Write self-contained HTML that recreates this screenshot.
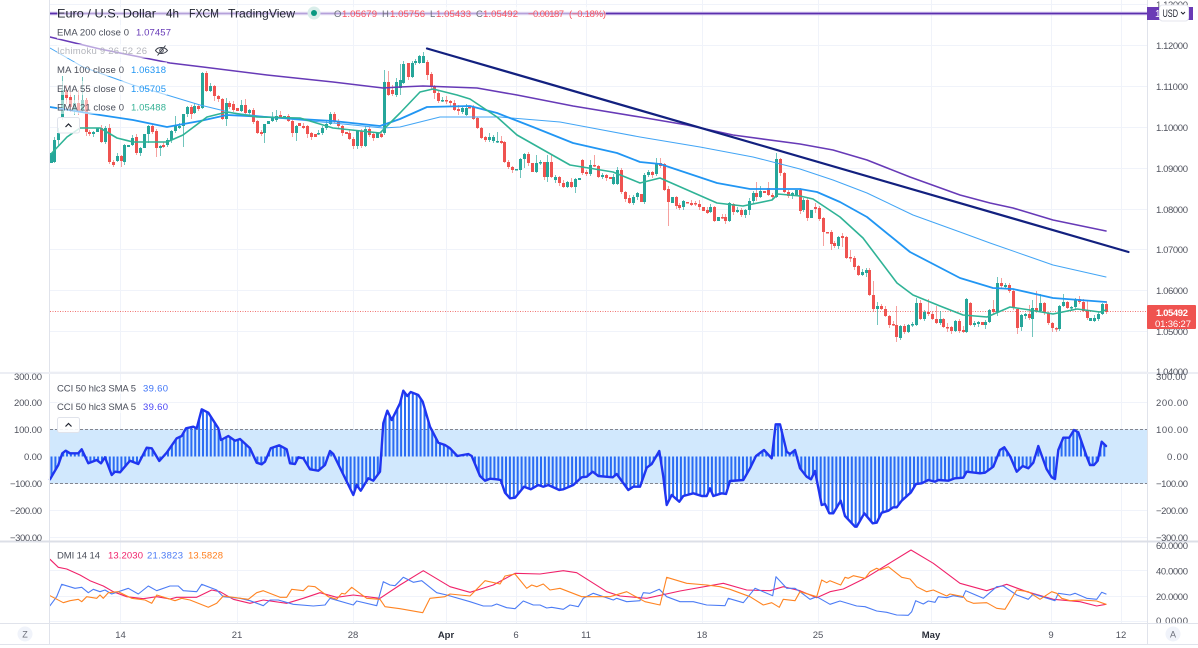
<!DOCTYPE html>
<html><head><meta charset="utf-8"><style>
html,body{margin:0;padding:0;background:#fff;width:1198px;height:648px;overflow:hidden}
svg{display:block;filter:blur(.3px)}
text{font-family:"Liberation Sans",sans-serif;font-size:9.5px;fill:#4a4e5a}
.ax{font-size:9.5px;fill:#50535e}
.lg{font-size:9.5px;fill:#4a4e5a}
polyline{fill:none;stroke-linejoin:round;stroke-linecap:round}
.red{fill:#f7525f}
</style></head><body>
<svg width="1198" height="648" viewBox="0 0 1198 648" xmlns="http://www.w3.org/2000/svg">
<g stroke="#f0f3fa" stroke-width="1" fill="none">
<path d="M50 4.5H1147M50 45.5H1147M50 86.5H1147M50 127.5H1147M50 168.5H1147M50 209.5H1147M50 249.5H1147M50 290.5H1147M50 331.5H1147M50 372H1147"/>
<path d="M50 402.5H1147M50 429.5H1147M50 456.5H1147M50 483.5H1147M50 510.5H1147M50 537.5H1147M50 570.5H1147M50 596.5H1147M50 621.5H1147"/>
<path d="M120.5 0V623M237.5 0V623M353.5 0V623M446.5 0V623M516.5 0V623M586.5 0V623M702.5 0V623M818.5 0V623M931.5 0V623M1051.5 0V623M1121.5 0V623"/>
</g>
<!-- CCI band -->
<rect x="50" y="429.5" width="1097" height="54" fill="#d1e8fd"/>
<path d="M50 429.5H1147M50 483.5H1147" stroke="#82858f" stroke-width="1" stroke-dasharray="3 2" fill="none"/>
<!-- price line -->
<path d="M50 311.5H1147" stroke="#ef5350" stroke-width="1" stroke-opacity=".8" stroke-dasharray="1 1.5" fill="none"/>
<!-- candles -->
<path id="gw" stroke="#26a69a" stroke-width="1" stroke-opacity=".65" fill="none"/>
<path id="rw" stroke="#ef5350" stroke-width="1" stroke-opacity=".55" fill="none"/>
<path id="gb" stroke="#26a69a" stroke-width="3" fill="none"/>
<path id="rb" stroke="#ef5350" stroke-width="3" fill="none"/>
<!-- MAs -->
<polyline stroke="#673ab7" stroke-width="1.6" points="50,37 100,49 170,63 203,67 267,75 333,82 383,88 400,87 423,86 477,88 517,95 573,106 640,117 687,125 733,135 800,144 833,150 867,160 910,177 960,195 990,203 1013,208 1053,220 1106,231"/>
<polyline stroke="#42a5f5" stroke-width="1" points="50,48 83,67 133,85 167,95 200,105 233,113 277,118 333,123 383,128 400,127 440,117 500,117 560,122 640,137 700,147 753,157 800,169 833,180 867,193 913,215 960,232 990,243 1033,258 1053,265 1106,277"/>
<polyline stroke="#2196f3" stroke-width="1.8" points="50,107 100,115 133,120 167,127 200,121 227,115 267,117 300,119 333,121 380,126 400,119 427,107 470,106 497,113 533,127 573,143 617,153 640,162 660,164 717,183 750,189 800,189 817,192 840,202 867,217 910,252 960,278 993,288 1013,289 1053,298 1106,302"/>
<polyline stroke="#2fb396" stroke-width="1.6" points="50,155 67,137 80,128 100,128 117,138 133,142 167,142 183,135 207,117 227,112 257,117 300,118 333,128 380,133 400,113 420,92 433,89 457,95 470,99 497,117 517,135 547,152 570,165 613,172 640,183 660,178 717,203 743,206 772,200 778,194 800,196 813,199 840,217 863,238 897,283 913,295 940,306 963,315 987,317 1010,307 1030,310 1053,314 1077,309 1100,312 1106,310"/>
<!-- trend line -->
<path d="M427 48.500L1128.500 252" stroke="#12207f" stroke-width="2.200" fill="none" stroke-linecap="round"/>
<!-- top purple line -->
<path d="M50 13.500H1147" stroke="#c9b8e8" stroke-width="3.500" fill="none"/>
<path d="M50 13.500H1147" stroke="#5b2fad" stroke-width="1.500" fill="none"/>
<!-- legend overlays -->
<g fill="#fff" fill-opacity=".55">
<rect x="57" y="7" width="549" height="13"/>
<rect x="57" y="25" width="115" height="14"/>
<rect x="57" y="44" width="112" height="14"/>
<rect x="57" y="62" width="110" height="14"/>
<rect x="57" y="81" width="110" height="14"/>
<rect x="57" y="100" width="110" height="14"/>
<rect x="57" y="381" width="111" height="13"/>
<rect x="57" y="400" width="111" height="13"/>
</g>
<!-- CCI -->
<path id="hist" stroke="#2a6cf4" stroke-width="2" fill="none"/>
<polyline id="cci" stroke="#2035f0" stroke-width="2.400"/>
<!-- DMI -->
<polyline id="dp" stroke="#f0226a" stroke-width="1.100"/>
<polyline id="db" stroke="#4c7cf5" stroke-width="1.100"/>
<polyline id="do" stroke="#ff8422" stroke-width="1.100"/>
<!-- borders -->
<g fill="none" stroke="#e0e3eb">
<path d="M49.500 0V645M1147.500 0V645" stroke-width="1"/>
<path d="M0 373H1198" stroke-width="2" stroke="#eceef4"/>
<path d="M0 541.500H1198" stroke-width="2" stroke="#dcdfe7"/>
<path d="M0 623.500H1198" stroke-width="1"/>
<path d="M0 644.500H1198" stroke-width="1"/>
</g>
<!-- legend text -->
<g>
<text x="57" y="17.500" style="font-size:12px;fill:#1e222d" textLength="99" lengthAdjust="spacingAndGlyphs">Euro / U.S. Dollar</text>
<text x="166" y="17.500" style="font-size:12px;fill:#1e222d" textLength="13" lengthAdjust="spacingAndGlyphs">4h</text>
<text x="189" y="17.500" style="font-size:12px;fill:#1e222d" textLength="30" lengthAdjust="spacingAndGlyphs">FXCM</text>
<text x="228" y="17.500" style="font-size:12px;fill:#1e222d" textLength="67" lengthAdjust="spacingAndGlyphs">TradingView</text>
<circle cx="314" cy="13" r="6.500" fill="#d9eeea"/><circle cx="314" cy="13" r="3" fill="#089981"/>
<text x="334" y="17" class="lg" style="fill:#6a6d78">O</text><text x="342" y="17" class="lg red" textLength="35">1.05679</text>
<text x="382" y="17" class="lg" style="fill:#6a6d78">H</text><text x="390" y="17" class="lg red" textLength="35">1.05756</text>
<text x="430" y="17" class="lg" style="fill:#6a6d78">L</text><text x="436" y="17" class="lg red" textLength="35">1.05433</text>
<text x="476" y="17" class="lg" style="fill:#6a6d78">C</text><text x="483" y="17" class="lg red" textLength="35">1.05492</text>
<text x="528" y="17" class="lg red" textLength="36">−0.00187</text><text x="569" y="17" class="lg red" textLength="37">(−0.18%)</text>

<text x="57" y="35.500" class="lg" textLength="72">EMA 200 close 0</text><text x="136" y="35.500" class="lg" style="fill:#673ab7" textLength="35">1.07457</text>
<text x="57" y="54" class="lg" style="fill:#b4b6bd" textLength="90">Ichimoku 9 26 52 26</text>
<path d="M155.500 50.500C158 46.500 164.500 46.500 167.500 50.500C164.500 54.500 158 54.500 155.500 50.500ZM157.500 55.500L165.500 45.500" fill="none" stroke="#3a3e4a" stroke-width="1"/><circle cx="161.500" cy="50.500" r="1.800" fill="none" stroke="#3a3e4a" stroke-width=".9"/>
<text x="57" y="73" class="lg" textLength="67">MA 100 close 0</text><text x="131" y="73" class="lg" style="fill:#2196f3" textLength="35">1.06318</text>
<text x="57" y="92" class="lg" textLength="67">EMA 55 close 0</text><text x="131" y="92" class="lg" style="fill:#2196f3" textLength="35">1.05705</text>
<text x="57" y="110.500" class="lg" textLength="67">EMA 21 close 0</text><text x="131" y="110.500" class="lg" style="fill:#36b296" textLength="35">1.05488</text>
<rect x="57.500" y="117.500" width="22" height="15.500" rx="2" fill="#fff" fill-opacity=".8" stroke="#e0e3eb"/>
<path d="M65.500 127L68.500 124L71.500 127" fill="none" stroke="#1e222d" stroke-width="1.200"/>

<text x="57" y="391.500" class="lg" textLength="79">CCI 50 hlc3 SMA 5</text><text x="143" y="391.500" class="lg" style="fill:#3f74f7" textLength="25">39.60</text>
<text x="57" y="410" class="lg" textLength="79">CCI 50 hlc3 SMA 5</text><text x="143" y="410" class="lg" style="fill:#4a46f5" textLength="25">39.60</text>
<rect x="57.500" y="417.500" width="22" height="15" rx="2" fill="#fff" fill-opacity=".9" stroke="#e0e3eb"/>
<path d="M65.500 426.500L68.500 423.500L71.500 426.500" fill="none" stroke="#1e222d" stroke-width="1.200"/>

<text x="57" y="558.500" class="lg" textLength="43">DMI 14 14</text>
<text x="108" y="558.500" class="lg" style="fill:#f0226a" textLength="35">13.2030</text>
<text x="147" y="558.500" class="lg" style="fill:#4c7cf5" textLength="36">21.3823</text>
<text x="188" y="558.500" class="lg" style="fill:#ff7f1e" textLength="35">13.5828</text>
</g>
<!-- right axis -->
<g class="axg">
<text class="ax" x="1156" y="8" textLength="32">1.13000</text>
<text class="ax" x="1156" y="49" textLength="32">1.12000</text>
<text class="ax" x="1156" y="90" textLength="32">1.11000</text>
<text class="ax" x="1156" y="131" textLength="32">1.10000</text>
<text class="ax" x="1156" y="172" textLength="32">1.09000</text>
<text class="ax" x="1156" y="213" textLength="32">1.08000</text>
<text class="ax" x="1156" y="253" textLength="32">1.07000</text>
<text class="ax" x="1156" y="294" textLength="32">1.06000</text>
<text class="ax" x="1156" y="335" textLength="32">1.05000</text>
<text class="ax" x="1156" y="375" textLength="32">1.04000</text>
<text class="ax" x="1156" y="380" textLength="30">300.00</text>
<text class="ax" x="1156" y="406" textLength="32">200.00</text>
<text class="ax" x="1156" y="433" textLength="32">100.00</text>
<text class="ax" x="1167" y="460" textLength="21">0.00</text>
<text class="ax" x="1156" y="487" textLength="32">−100.00</text>
<text class="ax" x="1156" y="514" textLength="32">−200.00</text>
<text class="ax" x="1156" y="541" textLength="32">−300.00</text>
<text class="ax" x="1156" y="549" textLength="32">60.0000</text>
<text class="ax" x="1156" y="574.500" textLength="32">40.0000</text>
<text class="ax" x="1156" y="600" textLength="32">20.0000</text>
<text class="ax" x="1156" y="624" textLength="32">0.0000</text>
</g>
<rect x="1148" y="623.500" width="50" height="20.500" fill="#fff"/>
<path d="M1147 623.500H1198" stroke="#e0e3eb"/>
<!-- left axis -->
<text class="ax" x="14" y="380" textLength="28">300.00</text>
<text class="ax" x="14" y="406" textLength="28">200.00</text>
<text class="ax" x="14" y="433" textLength="28">100.00</text>
<text class="ax" x="24" y="460" textLength="18">0.00</text>
<text class="ax" x="10" y="487" textLength="32">−100.00</text>
<text class="ax" x="10" y="514" textLength="32">−200.00</text>
<text class="ax" x="10" y="541" textLength="32">−300.00</text>
<!-- time axis -->
<g style="text-anchor:middle">
<text class="ax" x="120.500" y="638">14</text>
<text class="ax" x="237" y="638">21</text>
<text class="ax" x="353" y="638">28</text>
<text class="ax" x="446" y="638" style="font-weight:bold;fill:#2a2e39">Apr</text>
<text class="ax" x="516" y="638">6</text>
<text class="ax" x="586" y="638">11</text>
<text class="ax" x="702" y="638">18</text>
<text class="ax" x="818" y="638">25</text>
<text class="ax" x="931" y="638" style="font-weight:bold;fill:#2a2e39">May</text>
<text class="ax" x="1051" y="638">9</text>
<text class="ax" x="1121" y="638">12</text>
<circle cx="25" cy="634" r="7.500" fill="#f0f3fa"/><text class="ax" x="25" y="637.500" style="font-size:9px;fill:#6a6d78">Z</text>
<circle cx="1173" cy="634" r="7.500" fill="#f0f3fa"/><text class="ax" x="1173" y="637.500" style="font-size:9px;fill:#6a6d78">A</text>
</g>
<!-- purple label & USD -->
<rect x="1147" y="7" width="46" height="13" fill="#6a3ab5"/>
<text x="1155" y="17" style="font-size:10px;fill:#fff">1</text>
<rect x="1159.500" y="5" width="29" height="16" rx="3" fill="#fff" stroke="#e4e6ee"/>
<text x="1162.500" y="17" style="font-size:11px;fill:#1e222d" textLength="15.500" lengthAdjust="spacingAndGlyphs">USD</text>
<path d="M1181 12L1183 14L1185 12" fill="none" stroke="#1e222d" stroke-width="1"/>
<!-- last price label -->
<rect x="1147" y="305" width="49" height="24" rx="1" fill="#ef5350"/>
<text x="1156" y="316" style="font-size:9.500px;fill:#fff;font-weight:bold" textLength="32">1.05492</text>
<text x="1155" y="327" style="font-size:9.500px;fill:#fff" textLength="36">01:36:27</text>
</svg>
<script>
var D="51 153 163,54 140 162,58 133 140 128 146,62 90 117 76 120,r66 90 98 85 104,r70 97 107 92 112,74 103 110 95 115,r78 103 111 90 115,82 100 110 77 112,r86 100 132 98 136,r89 132 134,93 132 134,97 128 132,r101 128 142,105 128 142,r109 128 162 124 164,r113 162 165 160 167,117 156 161,r121 156 161 155 167,124 145 162 144 165,128 145 147,132 138 145,r136 137 153 134 155,140 148 153,144 134 148,148 126 134 125 143,r152 126 132,r156 131 148 129 157,160 146 148 145 156,r163 145 147,167 140 145,171 131 140,175 126 131 116 133,179 126 128,183 114 126 114 147,187 107 114,r191 107 114 105 119,194 106 113,r198 106 109,202 73 108 72 109,r206 73 91 71 92,210 86 91,r214 86 96 85 101,r218 96 99,r222 99 119 98 120,226 103 119 98 126,r229 103 107,r233 104 110 101 112,r237 108 111,241 105 111 100 112,r245 105 113 99 114,249 110 113,r253 110 122 108 124,r257 121 133 120 134,r261 132 134,264 124 133 124 143,268 121 124,272 117 121 112 122,276 116 120 110 122,r280 115 117 111 118,284 116 117,r288 116 121 114 122,r292 121 133 118 137,296 126 133 125 141,r299 123 126,r303 126 128,r307 126 134 125 138,r311 133 137,r315 134 137,318 133 134,322 128 133,326 124 128 121 130,330 114 124 112 125,r334 114 121 112 123,r338 121 126,r342 126 133,r346 132 134,r349 133 139,r353 139 146 137 149,357 131 146,r361 131 146 129 148,365 129 146 126 147,r369 129 135,r373 134 138,377 133 138,r381 134 137,384 82 133 70 135,r388 82 95 71 96,r392 90 94 85 96,396 82 95 78 97,400 80 88 64 95,403 64 83 61 84,r408 63 77 63 80,412 63 77 61 78,415 61 63,419 56 63 55 64,423 56 63 52 63,r427 62 75 60 80,r431 74 86 72 90,r434 86 93 85 99,r438 93 101 91 103,442 100 101,r446 100 101 96 104,r450 101 103,r454 103 110 100 111,r458 109 111 105 115,462 108 112 106 114,466 108 115 104 116,r469 107 108,r473 107 119 105 120,r477 118 128 117 129,r481 128 138 127 139,r485 137 140 136 142,489 137 140 133 142,493 137 141,497 141 142 132 143,r501 141 143 136 144,r504 142 162 141 163,r508 162 167 160 169,r512 167 170,516 169 170,520 159 170 158 178,524 154 159 153 168,r528 154 163 152 166,r532 163 172,536 163 172 155 173,540 162 163,r544 162 177 162 180,547 162 177 155 182,r551 162 177 154 178,555 177 180 175 183,r559 177 183,r563 183 187 180 188,567 182 187 181 188,r571 182 187 178 188,575 179 187 178 193,579 178 180,r582 160 173 159 175,r586 172 174,590 165 174 160 176,r594 165 166 155 167,r598 166 177 165 178,602 175 177,r606 175 178,r610 177 179,613 177 184,617 170 184 167 185,r621 170 192 168 194,r625 192 199 191 202,r629 198 203,633 197 203,637 193 197,r641 194 202,644 175 202 173 204,648 172 175,r652 172 175,656 163 174 158 176,r660 163 166 158 168,r664 164 190 163 191,r668 189 202 186 226,672 197 203,r676 197 206 196 209,r679 205 208 203 210,683 201 207,r687 202 203,r691 203 205,r695 203 204,r699 204 207 200 210,r703 207 211,r707 210 213,710 207 212 204 213,r714 207 221 206 222,718 217 221,r722 217 217 214 219,r725 217 221 214 224,729 203 221 202 222,r733 204 212 203 215,737 210 212,r741 210 215,745 210 215,749 201 210 198 215,753 193 201 191 204,r756 193 197 182 201,760 191 197 186 198,r764 191 193,r768 188 195 182 196,r772 195 197,776 159 197 153 198,r780 159 173 158 176,r784 173 192 172 193,r788 192 196,792 193 196,796 190 195,r800 190 211 188 214,803 200 210,r807 200 218 197 221,811 210 218,r815 207 209 203 213,r819 208 219,r823 218 232 217 246,r827 232 233,r831 232 244 230 250,r834 243 246,838 237 246,r842 236 238 233 247,r846 237 258 236 259,r850 257 258 250 262,r854 258 267 256 270,r858 266 275 265 276,862 272 275,866 270 273 268 277,r869 270 295 268 296,r873 295 309 281 312,877 306 309 302 325,r881 306 309 304 310,r885 309 316 306 317,r889 316 325 315 328,r893 324 325,r896 325 337 306 342,900 326 338 325 340,r904 326 332 324 334,908 325 332 324 333,912 324 325,916 303 325 298 326,r920 303 319 300 320,924 312 319 310 321,r928 312 314 299 316,r932 314 319 311 320,r936 319 323 306 324,940 319 323 311 325,r943 319 327 318 328,r947 327 328 323 332,r951 327 331 326 334,955 321 331 320 332,r959 321 331,r963 330 332 326 333,966 299 332 298 333,r970 303 325 302 326,974 323 325,978 322 324,r982 322 325,985 322 325 320 329,989 310 322 309 323,r993 309 312 300 315,997 283 312 277 316,r1001 283 286 278 288,1005 285 287,r1009 285 291 283 293,r1013 291 308 290 310,r1017 309 328 308 334,1021 315 327 314 331,1025 314 316,r1029 314 318 305 320,1032 308 319 300 337,r1036 308 311 291 313,1040 303 311 294 312,r1044 303 313 302 315,r1048 313 323 312 325,r1052 323 328 322 332,r1056 328 329,1059 306 329 305 331,1063 302 306 294 307,r1067 302 308 301 309,1071 307 308,1075 299 307 298 309,r1079 299 302 296 304,r1083 302 311 299 312,r1087 310 318 301 320,1090 318 321,1094 318 321,1098 314 319,1102 304 314 303 315,r1106 304 312 301 314";
var P={g:["",""],r:["",""]};
D.split(",").forEach(function(s,i){var r=s[0]=="r",a=(r?s.slice(1):s).split(" ").map(Number),x=a[0]+.5,t=a[1],b=a[2],h=a[3]||t-(i*7%4),l=a[4]||b+(i*5%4);if(b-t<1.5){b=t+1.5}var k=r?"r":"g";P[k][0]+="M"+x+" "+t+"V"+b;P[k][1]+="M"+x+" "+h+"V"+l;});
gb.setAttribute("d",P.g[0]);rb.setAttribute("d",P.r[0]);gw.setAttribute("d",P.g[1]);rw.setAttribute("d",P.r[1]);
function B(o,arrs){var out=[];arrs.forEach(function(A,j){var ox=[0,400,800][j];for(var i=0;i<A.length;i+=2){var x=ox+A[i]/3,y=o+A[i+1]/3;if(!out.length||x>out[out.length-1][0])out.push([x,y]);}});return out;}
function S(p){return p.map(function(q){return q[0].toFixed(1)+","+q[1].toFixed(1)}).join(" ")}
var cci=B(370,[[150,328,175,285,187,250,197,242,210,250,235,250,245,238,265,280,290,270,303,280,315,262,335,315,345,305,360,307,390,272,415,282,440,233,455,235,478,273,500,248,530,205,545,198,558,175,580,170,590,175,605,118,625,128,655,175,663,210,685,198,705,212,720,207,750,235,770,278,785,283,795,275,812,235,838,226,860,238,870,280,885,282,895,262,910,265,930,298,955,302,975,285,990,243,1000,252,1060,375,1070,345,1082,362,1105,325,1120,332,1140,305,1150,160,1162,122,1175,150,1200,100],
[0,100,10,62,22,78,32,66,55,75,68,95,90,170,115,218,135,225,150,235,172,258,205,252,215,258,240,318,255,332,270,326,290,328,302,330,315,368,330,385,345,383,372,350,392,358,415,345,430,350,445,345,478,360,490,358,520,345,545,322,560,320,578,305,595,318,638,322,650,312,685,360,700,350,720,350,740,293,755,282,778,243,790,320,800,405,815,375,838,395,850,378,880,370,905,378,920,378,930,355,940,378,965,370,978,372,990,333,1030,330,1050,295,1068,258,1092,240,1115,265,1127,163,1140,163,1160,245,1170,252,1185,240,1200,295],
[0,292,20,320,33,328,45,303,65,405,75,402,88,430,100,430,122,392,135,438,165,470,170,470,193,430,218,460,230,458,245,428,265,422,280,412,290,412,305,392,333,367,348,342,365,340,385,330,405,335,415,330,445,332,465,325,490,323,500,305,540,310,555,308,580,290,600,240,613,232,630,258,650,305,668,288,685,295,700,278,715,228,740,298,755,322,765,327,775,240,790,203,808,203,822,180,835,187,860,260,870,285,882,285,893,272,905,215,918,228]]);
document.getElementById("cci").setAttribute("points",S(cci));
var h="";for(var x=51.5;x<=1106.5;x+=3.885){var y=null;for(var i=1;i<cci.length;i++){if(cci[i][0]>=x){var a=cci[i-1],b=cci[i];y=a[1]+(b[1]-a[1])*(x-a[0])/(b[0]-a[0]);break;}}if(y===null)y=cci[cci.length-1][1];h+="M"+x.toFixed(1)+" 456.5V"+y.toFixed(1);}
hist.setAttribute("d",h);
document.getElementById("dp").setAttribute("points",S(B(370,[[150,568,175,592,200,597,240,615,270,632,310,648,340,665,380,680,430,686,470,680,510,687,530,682,590,682,635,660,660,665,700,688,750,700,790,690,860,700,910,685,960,668,1010,682,1060,675,1140,685,1200,645],[0,650,70,602,150,650,210,667,280,645,345,610,420,612,490,602,530,608,620,665,660,678,740,685,840,663,970,640,1040,660,1110,662,1150,650,1200,662],[0,665,50,683,90,665,130,657,195,625,333,540,400,580,480,640,560,662,620,643,680,665,760,688,840,695,890,708,918,703]])));
document.getElementById("db").setAttribute("points",S(B(370,[[150,707,170,680,185,643,225,655,245,652,265,668,280,658,300,665,315,660,335,672,385,655,415,672,445,648,470,662,510,648,535,648,550,662,590,665,605,643,650,660,670,680,720,685,750,692,790,707,810,690,835,690,880,703,940,708,975,705,990,685,1060,705,1070,693,1130,707,1150,635,1170,645,1185,647,1200,632],[0,632,10,622,40,637,65,632,110,668,140,675,210,695,250,708,275,708,290,702,320,713,345,716,370,693,400,705,420,705,440,714,455,712,490,718,510,705,535,710,550,685,580,670,640,690,650,685,680,695,720,692,730,668,750,670,778,658,800,680,840,695,880,695,920,705,975,707,985,685,1030,698,1065,655,1118,677,1128,620,1160,655,1185,655,1200,665],[0,667,30,688,50,680,90,703,120,693,170,708,195,710,230,723,260,727,290,735,325,736,335,725,347,692,370,702,385,693,405,697,415,680,440,683,460,677,488,682,497,662,550,685,590,650,610,648,650,675,685,688,700,672,765,692,775,670,810,675,825,670,860,685,890,688,905,667,918,672]])));
document.getElementById("do").setAttribute("points",S(B(370,[[150,677,190,698,210,692,235,688,245,695,260,680,290,685,300,675,310,685,325,668,355,665,395,685,435,690,455,700,470,675,525,692,545,685,570,690,625,712,650,700,670,678,745,688,770,668,790,662,840,682,860,682,875,658,910,662,925,648,945,650,985,680,1010,688,1025,670,1035,672,1055,652,1100,685,1140,688,1155,710,1200,716],[0,716,68,728,90,685,135,680,150,672,210,678,255,632,300,642,315,618,345,612,380,655,395,645,410,650,430,642,450,660,480,655,545,680,570,680,590,680,630,680,680,665,735,695,780,705,800,622,860,640,920,645,960,650,990,658,1050,680,1090,705,1115,698,1138,712,1150,688,1185,692,1200,665],[0,665,50,680,65,630,80,638,90,632,122,645,135,622,145,625,160,617,195,625,210,605,230,595,240,600,265,590,305,622,330,627,350,650,380,665,400,660,440,678,450,672,490,680,500,692,520,700,560,698,590,715,615,718,650,660,685,665,720,688,755,665,770,670,785,685,810,692,845,690,890,693,918,703]])));
</script>
</body></html>
